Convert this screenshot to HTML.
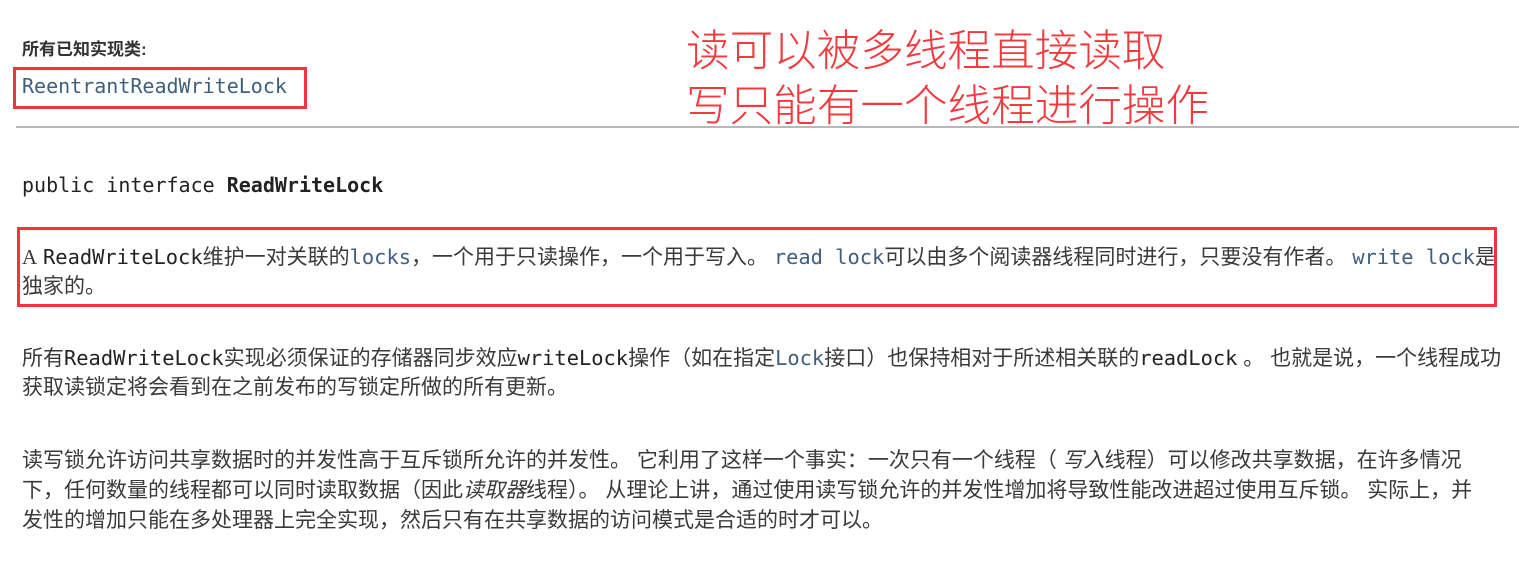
<!DOCTYPE html>
<html><head><meta charset="utf-8"><style>
body{margin:0;width:1519px;height:570px;background:#fff;position:relative;overflow:hidden;font-family:"Liberation Sans","Noto Sans CJK SC",sans-serif;color:#3a3a3a;}
.l{position:absolute;white-space:nowrap;font-size:21px;line-height:24px;}
code,.m{font-family:"DejaVu Sans Mono","Liberation Mono",monospace;font-size:20.4px;color:#222;}
.m{font-size:20px}
code.b,.b{color:#3f5f7f}
.box{position:absolute;border:3px solid #f0343b;box-sizing:border-box;}
.red{position:absolute;color:#f23a3e;font-family:"Noto Sans CJK SC",sans-serif;font-size:43.6px;line-height:50px;white-space:nowrap;font-weight:300;}
</style></head><body>
<div class="l" style="left:22px;top:38px;font-size:17px;font-weight:bold;color:#333;">所有已知实现类:</div>
<div class="l m b" style="left:22px;top:74px;">ReentrantReadWriteLock</div>
<div class="box" style="left:13px;top:67px;width:294px;height:42px;"></div>
<div style="position:absolute;left:16px;top:126px;width:1503px;height:2px;background:#b8b8b8;"></div>
<div class="l m" style="left:22px;top:173px;">public interface <b>ReadWriteLock</b></div>
<div class="l" style="left:22px;top:245px;"><span style="font-family:'Liberation Serif',serif">A</span> <code>ReadWriteLock</code>维护一对关联的<code class="b">locks</code>，一个用于只读操作，一个用于写入。 <code class="b">read lock</code>可以由多个阅读器线程同时进行，只要没有作者。 <code class="b">write lock</code>是</div>
<div class="l" style="left:22px;top:275px;">独家的。</div>
<div class="box" style="left:17px;top:227px;width:1480px;height:80px;"></div>
<div class="l" style="left:22px;top:346px;">所有<code>ReadWriteLock</code>实现必须保证的存储器同步效应<code>writeLock</code>操作（如在指定<code class="b">Lock</code>接口）也保持相对于所述相关联的<code>readLock</code> 。 也就是说，一个线程成功</div>
<div class="l" style="left:22px;top:376px;">获取读锁定将会看到在之前发布的写锁定所做的所有更新。</div>
<div class="l" style="left:22px;top:449px;">读写锁允许访问共享数据时的并发性高于互斥锁所允许的并发性。 它利用了这样一个事实：一次只有一个线程（ <i>写入</i>线程）可以修改共享数据，在许多情况</div>
<div class="l" style="left:22px;top:479px;">下，任何数量的线程都可以同时读取数据（因此<i>读取器</i>线程）。 从理论上讲，通过使用读写锁允许的并发性增加将导致性能改进超过使用互斥锁。 实际上，并</div>
<div class="l" style="left:22px;top:509px;">发性的增加只能在多处理器上完全实现，然后只有在共享数据的访问模式是合适的时才可以。</div>
<div class="red" style="left:686px;top:22px;">读可以被多线程直接读取</div>
<div class="red" style="left:686px;top:77px;">写只能有一个线程进行操作</div>
</body></html>
